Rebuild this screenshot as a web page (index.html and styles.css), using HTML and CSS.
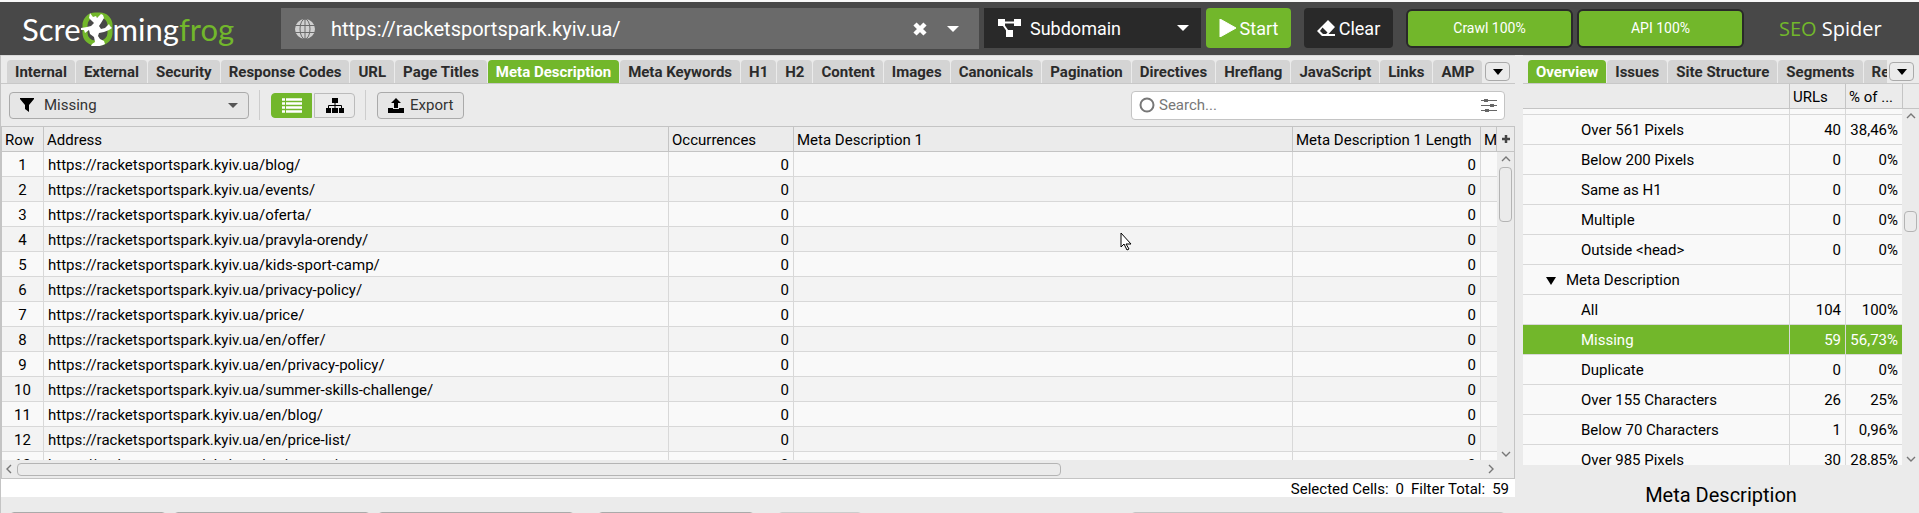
FILE: index.html
```html
<!DOCTYPE html>
<html lang="en">
<head>
  <meta charset="UTF-8">
  <meta name="viewport" content="width=device-width, initial-scale=1.0">
  <title>Screaming Frog SEO Spider</title>
  <link rel="stylesheet" href="styles.css">
</head>
<body>
  <header class="topbar">
    <div class="logo" aria-label="Screaming Frog">
      <span>Scre</span>
      <svg class="logo-frog" viewBox="0 0 32 34" width="32" height="34">
        <rect x="4" y="3" width="25" height="28" rx="10" fill="none" stroke="#72b72b" stroke-width="5"/>
        <path d="M9 1l3 4 3-1 1 2 4-4 2 1 1 3-3 5-2 3 2 3 4-1 4-4 1 2 2 2-3 2-5 2-5 1-1 3 2 3 4 2 1 3-2 1-7 2-5-1 1-2 3-2-1-5-4-3-1-4-4 3-1-3-3 0 0-2 6-1 4-1 3-3-2-2-3-3z" fill="#fff"/>
      </svg>
      <span>ming</span><span class="green">frog</span>
    </div>

    <div class="url-box">
      <svg viewBox="0 0 20 20" width="20" height="20" fill="none" stroke="#6a6a6a" stroke-width="1">
        <circle cx="10" cy="10" r="10" fill="#d0d0d0" stroke="none"/>
        <ellipse cx="10" cy="10" rx="5" ry="10"/>
        <path d="M10 0v20M0 6.500h20M0 13.500h20"/>
      </svg>
      <input type="text" value="https://racketsportspark.kyiv.ua/" aria-label="Enter URL to spider">
      <button class="icon-btn" aria-label="Clear URL">
        <svg viewBox="0 0 14 14" width="14" height="14"><path d="M2 2l10 10M12 2L2 12" stroke="#fff" stroke-width="4.500"/></svg>
      </button>
      <button class="icon-btn" aria-label="URL history">
        <svg viewBox="0 0 12 6" width="12" height="6"><path d="M0 0h12L6 6z" fill="#fff"/></svg>
      </button>
    </div>

    <div class="mode">
      <svg viewBox="0 0 23 18" width="23" height="18" fill="#fff">
        <path d="M0 0h7v7H0zM16 0h7v7h-7zM8 11h7v7H8z"/>
        <path d="M4 3.500h15M4 4l7 10" stroke="#fff" stroke-width="2"/>
      </svg>
      <select aria-label="Crawl mode"><option>Subdomain</option></select>
      <svg viewBox="0 0 12 6" width="12" height="6"><path d="M0 0h12L6 6z" fill="#fff"/></svg>
    </div>

    <button class="btn-start">
      <svg viewBox="0 0 17 18" width="17" height="18"><path d="M1 0l16 9-16 9z" fill="#fff" stroke="#fff" stroke-linejoin="round"/></svg>
      Start
    </button>
    <button class="btn-clear">
      <svg viewBox="0 0 18 16" width="18" height="16">
        <path d="M11 0l7 7-6.500 7H18v2H5L0 11z" fill="#fff"/>
        <path d="M5.500 7.500l5 5-1.500 1.500H6L3 11z" fill="#292929"/>
      </svg>
      Clear
    </button>

    <div class="progress">Crawl 100%</div>
    <div class="progress">API 100%</div>
    <div class="product"><span class="green">SEO</span> Spider</div>
  </header>

  <main class="workspace">
    <section class="main-pane">
      <nav class="tabs">
        <div class="tab-list">
          <button class="tab">Internal</button>
          <button class="tab">External</button>
          <button class="tab">Security</button>
          <button class="tab">Response Codes</button>
          <button class="tab">URL</button>
          <button class="tab">Page Titles</button>
          <button class="tab active">Meta Description</button>
          <button class="tab">Meta Keywords</button>
          <button class="tab">H1</button>
          <button class="tab">H2</button>
          <button class="tab">Content</button>
          <button class="tab">Images</button>
          <button class="tab">Canonicals</button>
          <button class="tab">Pagination</button>
          <button class="tab">Directives</button>
          <button class="tab">Hreflang</button>
          <button class="tab">JavaScript</button>
          <button class="tab">Links</button>
          <button class="tab">AMP</button>
          <button class="tab" aria-label="More"></button>
        </div>
        <button class="tab-more" aria-label="More tabs">
          <svg viewBox="0 0 10 6" width="10" height="6"><path d="M0 0h10L5 6z"/></svg>
        </button>
      </nav>

      <div class="toolbar">
        <div class="filter">
          <svg viewBox="0 0 14 14" width="14" height="14"><path d="M0 0h14v1L9 7v7l-4-3V7L0 1z"/></svg>
          <select aria-label="Filter"><option>Missing</option></select>
          <svg viewBox="0 0 10 5" width="10" height="5"><path d="M0 0h10L5 5z" fill="#555"/></svg>
        </div>
        <span class="divider"></span>
        <div class="view-switch">
          <button class="view-btn active" aria-label="List view">
            <svg viewBox="0 0 20 15" width="20" height="15" stroke="#fff" stroke-width="2.500"><path d="M0 1.500h3M4 1.500h16M0 5.500h3M4 5.500h16M0 9.500h3M4 9.500h16M0 13.500h3M4 13.500h16"/></svg>
          </button>
          <button class="view-btn" aria-label="Tree view">
            <svg viewBox="0 0 18 15" width="18" height="15"><path d="M6 0h6v5H6zM0 10h5v5H0zM6 10h6v5H6zM13 10h5v5h-5z"/><path d="M9 4v7M2.500 11V7.500h13V11" fill="none" stroke="#000"/></svg>
          </button>
        </div>
        <span class="divider"></span>
        <button class="btn-export">
          <svg viewBox="0 0 16 15" width="16" height="15"><path d="M8 0l5 5h-3v5H6V5H3zM0 10h5v1h6v-1h5v5H0z"/></svg>
          Export
        </button>
        <label class="search">
          <svg viewBox="0 0 16 16" width="16" height="16"><circle cx="8" cy="8" r="6.500" fill="none" stroke="#777" stroke-width="2"/></svg>
          <input type="text" placeholder="Search..." aria-label="Search">
          <svg viewBox="0 0 16 15" width="16" height="15"><path d="M0 2.500h16M0 7.500h16M0 12.500h16" stroke="#666"/><path d="M3 1h4v3H3zM9 6h4v3H9zM4 11h4v3H4z" fill="#666"/></svg>
        </label>
      </div>

      <div class="grid-frame">
        <div class="grid-body">
          <div class="grid-clip">
            <table class="grid">
              <colgroup>
                <col class="c-row"><col class="c-address"><col class="c-occ"><col><col class="c-len"><col class="c-next">
              </colgroup>
              <thead>
                <tr><th>Row</th><th>Address</th><th>Occurrences</th><th>Meta Description 1</th><th>Meta Description 1 Length</th><th>M</th></tr>
              </thead>
              <tbody>
                <tr><td>1</td><td>https://racketsportspark.kyiv.ua/blog/</td><td class="num">0</td><td></td><td class="num">0</td><td></td></tr>
                <tr><td>2</td><td>https://racketsportspark.kyiv.ua/events/</td><td class="num">0</td><td></td><td class="num">0</td><td></td></tr>
                <tr><td>3</td><td>https://racketsportspark.kyiv.ua/oferta/</td><td class="num">0</td><td></td><td class="num">0</td><td></td></tr>
                <tr><td>4</td><td>https://racketsportspark.kyiv.ua/pravyla-orendy/</td><td class="num">0</td><td></td><td class="num">0</td><td></td></tr>
                <tr><td>5</td><td>https://racketsportspark.kyiv.ua/kids-sport-camp/</td><td class="num">0</td><td></td><td class="num">0</td><td></td></tr>
                <tr><td>6</td><td>https://racketsportspark.kyiv.ua/privacy-policy/</td><td class="num">0</td><td></td><td class="num">0</td><td></td></tr>
                <tr><td>7</td><td>https://racketsportspark.kyiv.ua/price/</td><td class="num">0</td><td></td><td class="num">0</td><td></td></tr>
                <tr><td>8</td><td>https://racketsportspark.kyiv.ua/en/offer/</td><td class="num">0</td><td></td><td class="num">0</td><td></td></tr>
                <tr><td>9</td><td>https://racketsportspark.kyiv.ua/en/privacy-policy/</td><td class="num">0</td><td></td><td class="num">0</td><td></td></tr>
                <tr><td>10</td><td>https://racketsportspark.kyiv.ua/summer-skills-challenge/</td><td class="num">0</td><td></td><td class="num">0</td><td></td></tr>
                <tr><td>11</td><td>https://racketsportspark.kyiv.ua/en/blog/</td><td class="num">0</td><td></td><td class="num">0</td><td></td></tr>
                <tr><td>12</td><td>https://racketsportspark.kyiv.ua/en/price-list/</td><td class="num">0</td><td></td><td class="num">0</td><td></td></tr>
                <tr><td>13</td><td>https://racketsportspark.kyiv.ua/en/events/</td><td class="num">0</td><td></td><td class="num">0</td><td></td></tr>
              </tbody>
            </table>
          </div>
          <div class="vscroll">
            <button class="add-col" aria-label="Columns">
              <svg viewBox="0 0 8 8" width="8" height="8"><path d="M4 0v8M0 4h8" stroke="#444" stroke-width="2.500"/></svg>
            </button>
            <svg class="arrow" viewBox="0 0 10 6" width="10" height="6"><path d="M1 5l4-4 4 4"/></svg>
            <span class="thumb thumb-main"></span>
            <svg class="arrow arrow-end" viewBox="0 0 10 6" width="10" height="6"><path d="M1 1l4 4 4-4"/></svg>
          </div>
        </div>
        <div class="hscroll">
          <svg class="arrow" viewBox="0 0 6 10" width="6" height="10"><path d="M5 1L1 5l4 4"/></svg>
          <span class="track"><span class="thumb thumb-h"></span></span>
          <svg class="arrow" viewBox="0 0 6 10" width="6" height="10"><path d="M1 1l4 4-4 4"/></svg>
        </div>
      </div>

      <div class="status"><span>Selected Cells:</span><span>0</span><span>Filter Total:</span><span>59</span></div>

      <div class="lower-bar">
        <span class="stub stub-a"></span>
        <span class="stub stub-b"></span>
        <span class="stub stub-b"></span>
        <span class="stub stub-gap stub-a"></span>
        <span class="stub stub-gap stub-c"></span>
        <span class="stub stub-search"></span>
      </div>
    </section>

    <aside class="side-pane">
      <nav class="tabs">
        <div class="tab-list">
          <button class="tab active">Overview</button>
          <button class="tab">Issues</button>
          <button class="tab">Site Structure</button>
          <button class="tab">Segments</button>
          <button class="tab">Response Times</button>
        </div>
        <button class="tab-more" aria-label="More tabs">
          <svg viewBox="0 0 10 6" width="10" height="6"><path d="M0 0h10L5 6z"/></svg>
        </button>
      </nav>

      <div class="tree-head">
        <span></span><span>URLs</span><span>% of ...</span><span></span>
      </div>
      <div class="tree-body">
        <div class="tree-clip">
          <table class="tree">
            <colgroup><col><col class="c-urls"><col class="c-pct"></colgroup>
            <tbody>
              <tr class="sliver"><td></td><td></td><td></td></tr>
              <tr><td>Over 561 Pixels</td><td>40</td><td>38,46%</td></tr>
              <tr><td>Below 200 Pixels</td><td>0</td><td>0%</td></tr>
              <tr><td>Same as H1</td><td>0</td><td>0%</td></tr>
              <tr><td>Multiple</td><td>0</td><td>0%</td></tr>
              <tr><td>Outside &lt;head&gt;</td><td>0</td><td>0%</td></tr>
              <tr class="group"><td><svg viewBox="0 0 10 8" width="10" height="8"><path d="M0 0h10L5 8z"/></svg>Meta Description</td><td></td><td></td></tr>
              <tr><td>All</td><td>104</td><td>100%</td></tr>
              <tr class="selected"><td>Missing</td><td>59</td><td>56,73%</td></tr>
              <tr><td>Duplicate</td><td>0</td><td>0%</td></tr>
              <tr><td>Over 155 Characters</td><td>26</td><td>25%</td></tr>
              <tr><td>Below 70 Characters</td><td>1</td><td>0,96%</td></tr>
              <tr><td>Over 985 Pixels</td><td>30</td><td>28,85%</td></tr>
            </tbody>
          </table>
        </div>
        <div class="vscroll">
          <svg class="arrow" viewBox="0 0 10 6" width="10" height="6"><path d="M1 5l4-4 4 4"/></svg>
          <span class="thumb thumb-side"></span>
          <svg class="arrow arrow-end" viewBox="0 0 10 6" width="10" height="6"><path d="M1 1l4 4 4-4"/></svg>
        </div>
      </div>
      <h2 class="chart-title">Meta Description</h2>
    </aside>
  </main>

  <svg class="cursor" viewBox="0 0 12 19" width="12" height="19"><path d="M1 1v14l3-3 3 6 2-1-3-5h5z" fill="#fff" stroke="#000"/></svg>
</body>
</html>
```

FILE: styles.css
```css
* { margin: 0; padding: 0; box-sizing: border-box; }

body {
  font-family: Roboto, "Liberation Sans", sans-serif;
  font-size: 15px;
  color: #000;
  background: #ebebeb;
  height: 100vh;
  display: flex;
  flex-direction: column;
  overflow: hidden;
  border-top: 2px solid #f8f8f8;
}

button, input, select {
  font: inherit;
  color: inherit;
  border: none;
  background: none;
  outline: none;
}

select { appearance: none; flex: 1; min-width: 0; }

svg { flex: none; }

.green { color: #72b72b; }

/* top bar */
.topbar {
  display: flex;
  align-items: flex-start;
  flex: none;
  height: 53px;
  padding-top: 6px;
  background: #484848;
  color: #fff;
}

.logo {
  display: flex;
  align-items: center;
  width: 281px;
  height: 42px;
  padding-left: 22px;
  font-family: Lato, sans-serif;
  font-size: 31px;
  line-height: 36px;
}

.url-box {
  display: flex;
  align-items: center;
  flex: 1;
  height: 41px;
  padding: 0 20px 0 14px;
  margin-right: 5px;
  background: #6a6a6a;
}

.url-box input {
  flex: 1;
  min-width: 0;
  padding-left: 16px;
  font-size: 20px;
}

.icon-btn {
  display: flex;
  margin-left: 20px;
}

.mode {
  display: flex;
  align-items: center;
  width: 217px;
  height: 40px;
  padding: 0 12px 0 14px;
  margin-right: 5px;
  background: #292929;
  font-size: 18px;
}

.mode select { padding-left: 9px; }

.btn-start,
.btn-clear {
  display: flex;
  align-items: center;
  justify-content: center;
  gap: 4px;
  height: 40px;
  border-radius: 4px;
  font-size: 18px;
}

.btn-start {
  width: 85px;
  margin-right: 13px;
  background: #72b72b;
}

.btn-clear {
  width: 89px;
  margin-right: 13px;
  background: #292929;
}

.progress {
  width: 167px;
  height: 39px;
  margin: 1px 4px 0 0;
  border: 2px solid #292929;
  border-radius: 6px;
  background: #72b72b;
  font-size: 14px;
  line-height: 34px;
  text-align: center;
}

.product {
  width: 171px;
  padding-left: 31px;
  font-family: "Open Sans", sans-serif;
  font-size: 20px;
  line-height: 42px;
}

/* panes */
.workspace {
  display: flex;
  flex: 1;
  min-height: 0;
  gap: 8px;
}

.main-pane,
.side-pane {
  display: flex;
  flex-direction: column;
  min-width: 0;
}

.main-pane {
  flex: 1;
  border-left: 1px solid #c4c4c4;
}

.side-pane { width: 396px; }

.tabs {
  display: flex;
  flex: none;
  height: 29px;
  padding: 4px 5px 0 6px;
  border-top: 1px solid #d8d8d8;
  border-bottom: 1px solid #c8c8c8;
}

.tab-list {
  display: flex;
  flex: 1;
  gap: 1px;
  min-width: 0;
  overflow: hidden;
}

.tab {
  flex: none;
  padding: 0 8px;
  border-radius: 4px 4px 0 0;
  background: #d4d4d4;
  color: #2b2b2b;
  font-weight: 700;
  white-space: nowrap;
}

.tab.active {
  background: #72b72b;
  color: #fff;
}

.tab-more {
  display: flex;
  align-items: center;
  justify-content: center;
  width: 25px;
  height: 19px;
  margin: 2px 0 0 2px;
  border: 1px solid #aaa;
  border-radius: 4px;
}

.side-pane .tabs { padding-left: 5px; }

/* toolbar */
.toolbar {
  display: flex;
  align-items: center;
  flex: none;
  height: 42px;
  padding: 0 10px 0 8px;
  color: #333;
}

.filter {
  display: flex;
  align-items: center;
  width: 240px;
  height: 27px;
  padding: 0 10px;
  border: 1px solid #aaa;
  border-radius: 4px;
  background: #e6e6e6;
}

.filter select { padding-left: 10px; }

.divider {
  width: 1px;
  height: 30px;
  margin: 0 11px 0 10px;
  background: #cdcdcd;
}

.view-switch { display: flex; }

.view-btn {
  display: flex;
  align-items: center;
  justify-content: center;
  width: 41px;
  height: 25px;
  border: 1px solid #bbb;
  border-radius: 0 4px 4px 0;
}

.view-btn.active {
  margin-right: 2px;
  border-color: #72b72b;
  border-radius: 4px 0 0 4px;
  background: #72b72b;
}

.btn-export {
  display: flex;
  align-items: center;
  gap: 6px;
  height: 27px;
  padding: 0 10px;
  border: 1px solid #aaa;
  border-radius: 4px;
  background: #e6e6e6;
}

.search {
  display: flex;
  align-items: center;
  width: 374px;
  height: 29px;
  margin-left: auto;
  padding: 0 7px;
  border: 1px solid #c4c4c4;
  border-radius: 4px;
  background: #fff;
}

.search input {
  flex: 1;
  min-width: 0;
  padding-left: 4px;
}

.search input::placeholder { color: #777; }

/* main table */
.grid-frame {
  display: flex;
  flex-direction: column;
  flex: 1;
  min-height: 0;
  border: 1px solid #c4c4c4;
}

.grid-body {
  display: flex;
  flex: 1;
  min-height: 0;
}

.grid-clip {
  flex: 1;
  min-width: 0;
  overflow: hidden;
}

.grid,
.tree {
  width: 100%;
  table-layout: fixed;
  border-collapse: separate;
  border-spacing: 0;
}

.c-row { width: 42px; }
.c-address { width: 625px; }
.c-occ { width: 125px; }
.c-len { width: 188px; }
.c-next { width: 16px; }

.grid th,
.grid td {
  height: 25px;
  padding: 2px 4px 0;
  border-right: 1px solid #d8d8d8;
  border-bottom: 1px solid #d8d8d8;
  line-height: 22px;
  white-space: nowrap;
  overflow: hidden;
}

.grid th {
  padding: 2px 0 0 3px;
  border-color: #c4c4c4;
  background: #ebebeb;
  font-weight: 400;
  text-align: left;
}

.grid td { background: #f9f9f9; }
.grid tr:nth-child(even) td { background: #f3f3f3; }
.grid td:first-child { text-align: center; }
.grid td:last-child { border-right: none; }
.grid .num { text-align: right; }

.vscroll {
  display: flex;
  flex-direction: column;
  align-items: center;
  width: 17px;
}

.add-col {
  display: flex;
  align-items: center;
  justify-content: center;
  width: 100%;
  height: 25px;
  border-bottom: 1px solid #c4c4c4;
}

.arrow {
  margin-top: 4px;
  fill: none;
  stroke: #777;
  stroke-width: 1.4;
}

.arrow-end { margin: auto 0 3px; }

.thumb {
  border: 1px solid #b4b4b4;
  border-radius: 4px;
  background: #ebebeb;
}

.thumb-main {
  width: 13px;
  height: 55px;
  margin-top: 5px;
}

.thumb-side {
  width: 13px;
  height: 21px;
  margin-top: 92px;
}

.hscroll {
  display: flex;
  align-items: center;
  height: 18px;
  padding: 0 20px 0 4px;
}

.hscroll .arrow { margin: 0; }

.track {
  display: flex;
  flex: 1;
  padding-left: 5px;
}

.thumb-h {
  width: 71%;
  height: 13px;
}

.status {
  display: flex;
  justify-content: flex-end;
  gap: 7px;
  flex: none;
  height: 18px;
  padding-right: 6px;
  background: #fff;
  line-height: 20px;
}

/* lower details bar, only its top edge is in view */
.lower-bar {
  display: flex;
  gap: 8px;
  flex: none;
  height: 16px;
  padding: 15px 10px 0 9px;
  overflow: hidden;
}

.stub {
  height: 27px;
  border: 1px solid #aaa;
  border-radius: 4px;
}

.stub-a { width: 156px; }
.stub-b { width: 196px; }
.stub-c { width: 84px; border-color: #ccc; }
.stub-gap { margin-left: 16px; }
.stub-search { width: 374px; margin-left: auto; border-color: #c4c4c4; }

/* overview tree */
.tree-head {
  display: flex;
  flex: none;
  height: 25px;
  border-bottom: 1px solid #c4c4c4;
  line-height: 26px;
}

.tree-head span {
  width: 56px;
  padding-left: 3px;
  border-left: 1px solid #c4c4c4;
  white-space: nowrap;
}

.tree-head span:first-child { flex: 1; border: none; }
.tree-head span:nth-child(3) { width: 57px; }
.tree-head span:last-child { width: 17px; }

.tree-body {
  display: flex;
  flex: 1;
  min-height: 0;
}

.tree-clip {
  flex: 1;
  min-width: 0;
  overflow: hidden;
}

.c-urls { width: 56px; }
.c-pct { width: 56px; }

.tree td {
  height: 30px;
  padding: 1px 4px 0 3px;
  border-right: 1px solid #d8d8d8;
  border-bottom: 1px solid #d8d8d8;
  background: #f9f9f9;
  text-align: right;
  white-space: nowrap;
}

.tree td:first-child {
  padding-left: 58px;
  text-align: left;
}

.tree td:last-child { border-right: none; }
.tree .sliver td { height: 6px; }

.tree .group td:first-child { padding-left: 23px; }
.group svg { margin-right: 10px; }

.tree .selected td {
  background: #72b72b;
  color: #fff;
}

.chart-title {
  flex: none;
  height: 48px;
  font-size: 20px;
  font-weight: 400;
  line-height: 60px;
  text-align: center;
}

.cursor {
  position: absolute;
  left: 1120px;
  top: 232px;
}
```
